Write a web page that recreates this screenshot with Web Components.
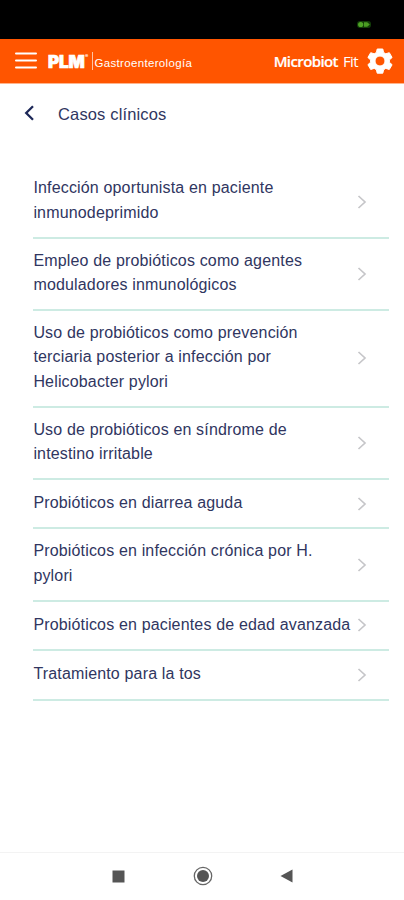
<!DOCTYPE html>
<html lang="es">
<head>
<meta charset="utf-8">
<title>Casos clínicos</title>
<style>
  html, body {
    margin: 0;
    height: 100%;
    overflow: hidden;
    background: #fff;
  }
  body {
    --brand: #ff5500;
    --ink: #30365f;
    --line: #cdebe3;
    font-family: "Liberation Sans", Arial, sans-serif;
    color: var(--ink);
  }
</style>
</head>
<body>
<app-screen>
  <status-bar slot="top"></status-bar>
  <app-header slot="top" section="Gastroenterología"></app-header>
  <page-title>Casos clínicos</page-title>
  <case-list>
    <case-item>Infección oportunista en paciente inmunodeprimido</case-item>
    <case-item>Empleo de probióticos como agentes moduladores inmunológicos</case-item>
    <case-item>Uso de probióticos como prevención terciaria posterior a infección por Helicobacter pylori</case-item>
    <case-item>Uso de probióticos en síndrome de intestino irritable</case-item>
    <case-item>Probióticos en diarrea aguda</case-item>
    <case-item>Probióticos en infección crónica por H. pylori</case-item>
    <case-item>Probióticos en pacientes de edad avanzada</case-item>
    <case-item>Tratamiento para la tos</case-item>
  </case-list>
  <nav-bar slot="bottom"></nav-bar>
</app-screen>

<script>
class BaseElement extends HTMLElement {
  constructor() {
    super();
    const shadow = this.attachShadow({mode: 'open'});
    shadow.innerHTML = this.template();
  }
}

class AppScreen extends BaseElement {
  template() {
    return `
      <style>
        :host { display: flex; flex-direction: column; height: 900px; }
        main { flex: 1; min-height: 0; }
      </style>
      <slot name="top"></slot>
      <main><slot></slot></main>
      <slot name="bottom"></slot>`;
  }
}

class StatusBar extends BaseElement {
  template() {
    return `
      <style>
        :host {
          display: flex;
          justify-content: flex-end;
          align-items: flex-end;
          box-sizing: border-box;
          height: 38.5px;
          padding: 0 33px 10.5px 0;
          background: #000;
          flex: none;
        }
        svg { display: block; }
      </style>
      <svg width="14" height="7" viewBox="0 0 14 7">
        <rect width="14" height="7" rx="3" fill="#123c08"/>
        <circle cx="3.7" cy="3.5" r="2.6" fill="#4fa326"/>
        <path d="M7 1.2h3.2l2.6 2.3-2.6 2.3H7z" fill="#4a9c22"/>
      </svg>`;
  }
}

class AppHeader extends BaseElement {
  template() {
    return `
      <style>
        :host {
          display: flex;
          align-items: center;
          box-sizing: border-box;
          height: 45.5px;
          padding: 0 11px 0 15px;
          background: var(--brand);
          border-bottom: 1px solid #ffb48c;
          color: #fff;
          flex: none;
          white-space: nowrap;
        }
        svg { display: block; flex: none; }
        .logo {
          display: flex;
          align-items: center;
          margin-left: 11px;
        }
        .plm {
          font: 900 17px/20px Inter, sans-serif;
          letter-spacing: -.1px;
          -webkit-text-stroke: .7px #fff;
          width: 37px;
          padding-top: 2px;
        }
        sup {
          font: 700 5px/5px Inter, sans-serif;
          width: 7px;
          align-self: flex-start;
          margin-top: 4px;
        }
        .section {
          border-left: 1px solid #ffc3a3;
          font-size: 11.5px;
          line-height: 14px;
          padding: 3.5px 0 0 1.5px;
          letter-spacing: .33px;
        }
        .product {
          margin-left: auto;
          margin-right: 9px;
          display: flex;
          align-items: baseline;
          font: 15px/20px "Open Sans", sans-serif;
        }
        .product b { font-weight: 600; letter-spacing: -.6px; -webkit-text-stroke: .2px #fff; }
        .product span { margin-left: 5px; letter-spacing: -.6px; font-weight: 400; }
      </style>
      <svg width="22" height="17" viewBox="0 0 22 17">
        <path d="M1 1.5h20M1 8.5h20M1 15.5h20" stroke="#fff" stroke-width="2" stroke-linecap="round"/>
      </svg>
      <div class="logo">
        <span class="plm">PLM</span><sup>®</sup>
        <span class="section"></span>
      </div>
      <div class="product"><b>Microbiot</b><span>Fit</span></div>
      <svg width="26" height="26" viewBox="0 0 26 26">
        <path fill="#fff" fill-rule="evenodd" stroke="#fff" stroke-linejoin="round" d="M10.2 1h5.6l.8 3.5 2.2 1.3 3.5-1.1 2.8 4.8-2.7 2.4v2.4l2.7 2.4-2.8 4.8-3.5-1.1-2.2 1.3-.8 3.5h-5.6l-.8-3.5-2.2-1.3-3.5 1.1L.9 16.7l2.7-2.4v-2.4L.9 9.5l2.8-4.8 3.5 1.1 2.2-1.3zM13 8a5 5 0 1 0 0 10 5 5 0 0 0 0-10z"/>
      </svg>`;
  }

  connectedCallback() {
    this.shadowRoot.querySelector('.section').textContent = this.getAttribute('section');
  }
}

class PageTitle extends BaseElement {
  template() {
    return `
      <style>
        :host {
          display: flex;
          align-items: center;
          height: 61px;
          padding-left: 24px;
          font-size: 16.5px;
          letter-spacing: .15px;
        }
        svg { display: block; margin-right: 23px; margin-top: -3px; }
      </style>
      <svg width="11" height="16" viewBox="0 0 11 16">
        <path d="M9 1.2L2.2 8 9 14.8" fill="none" stroke="#1d2858" stroke-width="2.3"/>
      </svg>
      <slot></slot>`;
  }
}

class CaseList extends BaseElement {
  template() {
    return `
      <style>
        :host { display: block; padding: 21.5px 15px 0 33px; }
      </style>
      <slot></slot>`;
  }
}

class CaseItem extends BaseElement {
  template() {
    return `
      <style>
        :host {
          display: flex;
          align-items: center;
          box-sizing: border-box;
          min-height: 49.5px;
          padding: 9.9px 22px 10.9px 0;
          border-bottom: 2px solid var(--line);
        }
        .text {
          flex: none;
          width: 318.5px;
          padding-left: .4px;
          box-sizing: border-box;
          font-size: 16px;
          line-height: 24.7px;
          letter-spacing: .16px;
        }
        svg { display: block; margin-left: auto; margin-top: 1px; flex: none; }
      </style>
      <div class="text"><slot></slot></div>
      <svg width="10" height="14" viewBox="0 0 10 14">
        <path d="M1.5 1L8 7l-6.500 6" fill="none" stroke="#c6c6c9" stroke-width="1.7"/>
      </svg>`;
  }
}

class NavBar extends BaseElement {
  template() {
    return `
      <style>
        :host {
          display: flex;
          justify-content: center;
          align-items: center;
          gap: 67.5px;
          box-sizing: border-box;
          height: 48px;
          padding: 0 0 1px 1px;
          border-top: 1px solid #f3f3f3;
          flex: none;
        }
        svg { display: block; }
      </style>
      <svg width="13" height="13" viewBox="0 0 13 13">
        <path d="M.5.5h12v12H.5z" fill="#555"/>
      </svg>
      <svg width="20" height="20" viewBox="0 0 20 20">
        <circle cx="10" cy="10" r="8.7" fill="none" stroke="#666" stroke-width="1.3"/>
        <circle cx="10" cy="10" r="6" fill="#555"/>
      </svg>
      <svg width="13" height="14" viewBox="0 0 13 14">
        <path d="M12.5.5v13L.5 7z" fill="#555"/>
      </svg>`;
  }
}

customElements.define('app-screen', AppScreen);
customElements.define('status-bar', StatusBar);
customElements.define('app-header', AppHeader);
customElements.define('page-title', PageTitle);
customElements.define('case-list', CaseList);
customElements.define('case-item', CaseItem);
customElements.define('nav-bar', NavBar);
</script>
</body>
</html>
